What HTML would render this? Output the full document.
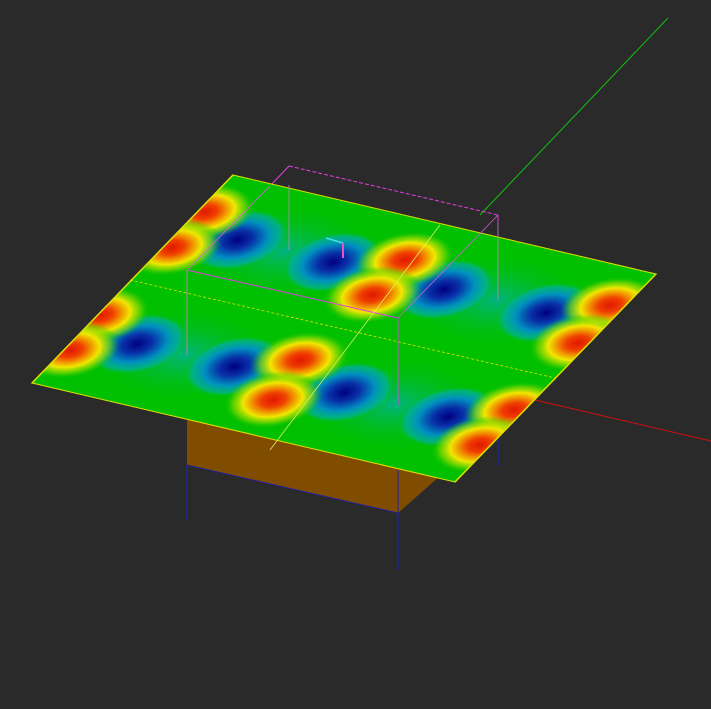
<!DOCTYPE html>
<html><head><style>html,body{margin:0;padding:0;background:#2a2a2a;}svg{display:block}</style></head>
<body>
<svg width="711" height="709" viewBox="0 0 711 709" xmlns="http://www.w3.org/2000/svg">
<defs>
<radialGradient id="r">
<stop offset="0" stop-color="#e01800"/>
<stop offset="0.25" stop-color="#f04000"/>
<stop offset="0.45" stop-color="#f0a000"/>
<stop offset="0.6" stop-color="#f0e800"/>
<stop offset="0.8" stop-color="#80d800" stop-opacity="0.7"/>
<stop offset="1" stop-color="#00c000" stop-opacity="0"/>
</radialGradient>
<radialGradient id="b">
<stop offset="0" stop-color="#000080"/>
<stop offset="0.3" stop-color="#0830a8"/>
<stop offset="0.6" stop-color="#0090c0"/>
<stop offset="0.85" stop-color="#00b0a0" stop-opacity="0.7"/>
<stop offset="1" stop-color="#00c000" stop-opacity="0"/>
</radialGradient>
<radialGradient id="t">
<stop offset="0" stop-color="#00b0a0" stop-opacity="0.8"/>
<stop offset="1" stop-color="#00c000" stop-opacity="0"/>
</radialGradient>
<clipPath id="c"><rect x="0" y="0" width="1" height="1"/></clipPath>
</defs>
<rect width="711" height="709" fill="#2a2a2a"/>
<line x1="480" y1="215" x2="668" y2="18" stroke="#10c010" stroke-width="1"/>
<line x1="535" y1="400" x2="711" y2="441" stroke="#d01010" stroke-width="1"/>
<polygon points="187,412 187,465 398,513 440,476 440,420" fill="#804c00"/>
<line x1="187" y1="465" x2="398" y2="513" stroke="#2020a0"/>
<line x1="187" y1="465" x2="187" y2="520" stroke="#2020c0"/>
<line x1="398" y1="470" x2="398" y2="570" stroke="#2020c0"/>
<line x1="498" y1="440" x2="498" y2="466" stroke="#2020c0"/>
<line x1="289" y1="166" x2="498" y2="215" stroke="#e040e0" stroke-dasharray="4,2"/>
<line x1="289" y1="166" x2="270" y2="186" stroke="#e040e0"/>
<line x1="498" y1="215" x2="498" y2="225" stroke="#e040e0"/>
<g transform="matrix(423,99,201,-208,32,383)">
<g clip-path="url(#c)">
<rect x="0" y="0" width="1" height="1" fill="#00c000"/>
<g>
<ellipse cx="0.24" cy="0.75" rx="0.2" ry="0.22" fill="url(#t)"/>
<ellipse cx="0.74" cy="0.75" rx="0.2" ry="0.22" fill="url(#t)"/>
<ellipse cx="0.24" cy="0.25" rx="0.2" ry="0.22" fill="url(#t)"/>
<ellipse cx="0.74" cy="0.25" rx="0.2" ry="0.22" fill="url(#t)"/>
<ellipse cx="0.13" cy="0.75" rx="0.1" ry="0.14" fill="url(#b)"/>
<ellipse cx="0.355" cy="0.75" rx="0.1" ry="0.14" fill="url(#b)"/>
<ellipse cx="0.62" cy="0.745" rx="0.1" ry="0.14" fill="url(#b)"/>
<ellipse cx="0.86" cy="0.747" rx="0.1" ry="0.14" fill="url(#b)"/>
<ellipse cx="0.13" cy="0.25" rx="0.1" ry="0.14" fill="url(#b)"/>
<ellipse cx="0.36" cy="0.25" rx="0.1" ry="0.14" fill="url(#b)"/>
<ellipse cx="0.62" cy="0.25" rx="0.1" ry="0.14" fill="url(#b)"/>
<ellipse cx="0.865" cy="0.25" rx="0.1" ry="0.14" fill="url(#b)"/>
</g>
<g>
<ellipse cx="0.015" cy="0.83" rx="0.1" ry="0.13" fill="url(#r)"/>
<ellipse cx="0.017" cy="0.66" rx="0.1" ry="0.13" fill="url(#r)"/>
<ellipse cx="0.49" cy="0.825" rx="0.1" ry="0.13" fill="url(#r)"/>
<ellipse cx="0.492" cy="0.657" rx="0.1" ry="0.13" fill="url(#r)"/>
<ellipse cx="0.97" cy="0.836" rx="0.1" ry="0.13" fill="url(#r)"/>
<ellipse cx="0.978" cy="0.658" rx="0.1" ry="0.13" fill="url(#r)"/>
<ellipse cx="0.005" cy="0.33" rx="0.1" ry="0.13" fill="url(#r)"/>
<ellipse cx="0.012" cy="0.164" rx="0.1" ry="0.13" fill="url(#r)"/>
<ellipse cx="0.474" cy="0.336" rx="0.1" ry="0.13" fill="url(#r)"/>
<ellipse cx="0.496" cy="0.155" rx="0.1" ry="0.13" fill="url(#r)"/>
<ellipse cx="0.98" cy="0.337" rx="0.1" ry="0.13" fill="url(#r)"/>
<ellipse cx="0.979" cy="0.168" rx="0.1" ry="0.13" fill="url(#r)"/>
</g>
</g>
<rect x="0" y="0" width="1" height="1" fill="none" stroke="#e0e000" stroke-width="0.004"/>
</g>
<line x1="130" y1="280" x2="555" y2="378" stroke="#e0e000" stroke-width="0.8" stroke-dasharray="3,2"/>
<line x1="270" y1="186" x2="187" y2="270" stroke="#e060e0" stroke-width="0.8"/>
<line x1="187" y1="270" x2="398" y2="318" stroke="#e040e0" stroke-width="1"/>
<line x1="398" y1="318" x2="498" y2="215" stroke="#d060d0" stroke-width="0.8"/>
<line x1="398" y1="318" x2="398" y2="405" stroke="#e040e0" stroke-width="1"/>
<line x1="187" y1="270" x2="187" y2="355" stroke="#d080d0" stroke-width="0.8"/>
<line x1="289" y1="185" x2="289" y2="250" stroke="#c080c0" stroke-width="0.8"/>
<line x1="498" y1="225" x2="498" y2="300" stroke="#c080c0" stroke-width="0.8"/>
<line x1="440" y1="225" x2="270" y2="450" stroke="#e0f060" stroke-width="0.8"/>
<line x1="326" y1="238" x2="343" y2="243" stroke="#40e0e0" stroke-width="1.5"/>
<line x1="343" y1="243" x2="343" y2="258" stroke="#f050c0" stroke-width="2"/>
</svg>
</body></html>
